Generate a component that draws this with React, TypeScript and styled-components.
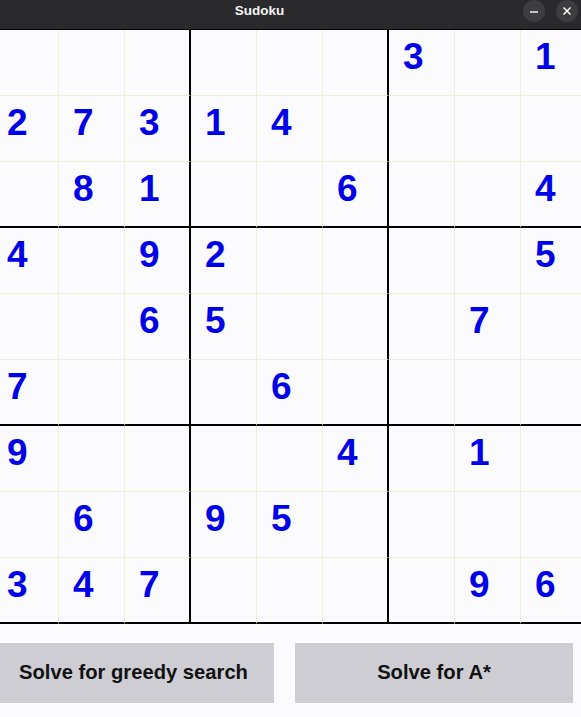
import React from "react";
import styled, { createGlobalStyle } from "styled-components";

const GlobalStyle = createGlobalStyle`
  html, body { margin: 0; padding: 0; background: #fbfbfd; overflow: hidden; }
  body { font-family: "Liberation Sans", Arial, sans-serif; }
`;

const Window = styled.div`
  width: 581px;
  height: 717px;
  overflow: hidden;
  background: #fbfbfd;
  display: flex;
  flex-direction: column;
`;

const TitleBar = styled.div`
  height: 29px;
  background: #2a2a2c;
  display: flex;
  align-items: flex-start;
  flex-shrink: 0;
`;

const Title = styled.div`
  flex: 1;
  text-align: center;
  color: #f4f4f4;
  font-family: "Liberation Sans", Arial, sans-serif;
  font-weight: bold;
  font-size: 13.5px;
  line-height: 22px;
  padding-right: 4px;
`;

const Controls = styled.div`
  display: flex;
  gap: 11px;
  padding-right: 3px;
`;

const CtrlButton = styled.div`
  width: 22px;
  height: 22px;
  border-radius: 50%;
  background: #3d3d3f;
  display: flex;
  align-items: center;
  justify-content: center;
`;

const Board = styled.div`
  margin-left: -7px;
  width: 594px;
  display: grid;
  grid-template-columns: repeat(9, 66px);
  grid-auto-rows: 66px;
  border-top: 1px solid #000;
  flex-shrink: 0;
`;

const Cell = styled.div<{ $thickRight: boolean; $thickBottom: boolean }>`
  box-sizing: border-box;
  border-right: ${(p) => (p.$thickRight ? "2px solid #000" : "1px solid #efefd4")};
  border-bottom: ${(p) => (p.$thickBottom ? "2px solid #000" : "1px solid #efefd4")};
  padding: 8px 0 0 14px;
  color: #0000e8;
  font-family: "Liberation Sans", Arial, sans-serif;
  font-weight: bold;
  font-size: 37px;
  line-height: 1;
`;

const ButtonRow = styled.div`
  margin-top: 19px;
  margin-left: -7px;
  display: grid;
  grid-template-columns: 281px 278px;
  column-gap: 21px;
`;

const SolveButton = styled.button`
  height: 60px;
  border: none;
  margin: 0;
  padding: 0;
  background: #cdcdd3;
  color: #111;
  font-family: "Liberation Sans", Arial, sans-serif;
  font-weight: bold;
  font-size: 20.2px;
  display: flex;
  align-items: center;
  justify-content: center;
  padding-bottom: 2px;
`;

const board: number[][] = [
  [0, 0, 0, 0, 0, 0, 3, 0, 1],
  [2, 7, 3, 1, 4, 0, 0, 0, 0],
  [0, 8, 1, 0, 0, 6, 0, 0, 4],
  [4, 0, 9, 2, 0, 0, 0, 0, 5],
  [0, 0, 6, 5, 0, 0, 0, 7, 0],
  [7, 0, 0, 0, 6, 0, 0, 0, 0],
  [9, 0, 0, 0, 0, 4, 0, 1, 0],
  [0, 6, 0, 9, 5, 0, 0, 0, 0],
  [3, 4, 7, 0, 0, 0, 0, 9, 6],
];

export default function App() {
  return (
    <>
      <GlobalStyle />
      <Window>
        <TitleBar>
          <Title>Sudoku</Title>
          <Controls>
            <CtrlButton>
              <svg width="10" height="10" viewBox="0 0 10 10">
                <line x1="1" y1="6" x2="9" y2="6" stroke="#fff" strokeWidth="1.4" />
              </svg>
            </CtrlButton>
            <CtrlButton>
              <svg width="10" height="10" viewBox="0 0 10 10">
                <line x1="1.5" y1="1.5" x2="8.5" y2="8.5" stroke="#fff" strokeWidth="1.4" />
                <line x1="8.5" y1="1.5" x2="1.5" y2="8.5" stroke="#fff" strokeWidth="1.4" />
              </svg>
            </CtrlButton>
          </Controls>
        </TitleBar>
        <Board>
          {board.map((row, r) =>
            row.map((v, c) => (
              <Cell
                key={`${r}-${c}`}
                $thickRight={c === 2 || c === 5 || c === 8}
                $thickBottom={r === 2 || r === 5 || r === 8}
              >
                {v !== 0 ? v : ""}
              </Cell>
            ))
          )}
        </Board>
        <ButtonRow>
          <SolveButton>Solve for greedy search</SolveButton>
          <SolveButton>Solve for A*</SolveButton>
        </ButtonRow>
      </Window>
    </>
  );
}
